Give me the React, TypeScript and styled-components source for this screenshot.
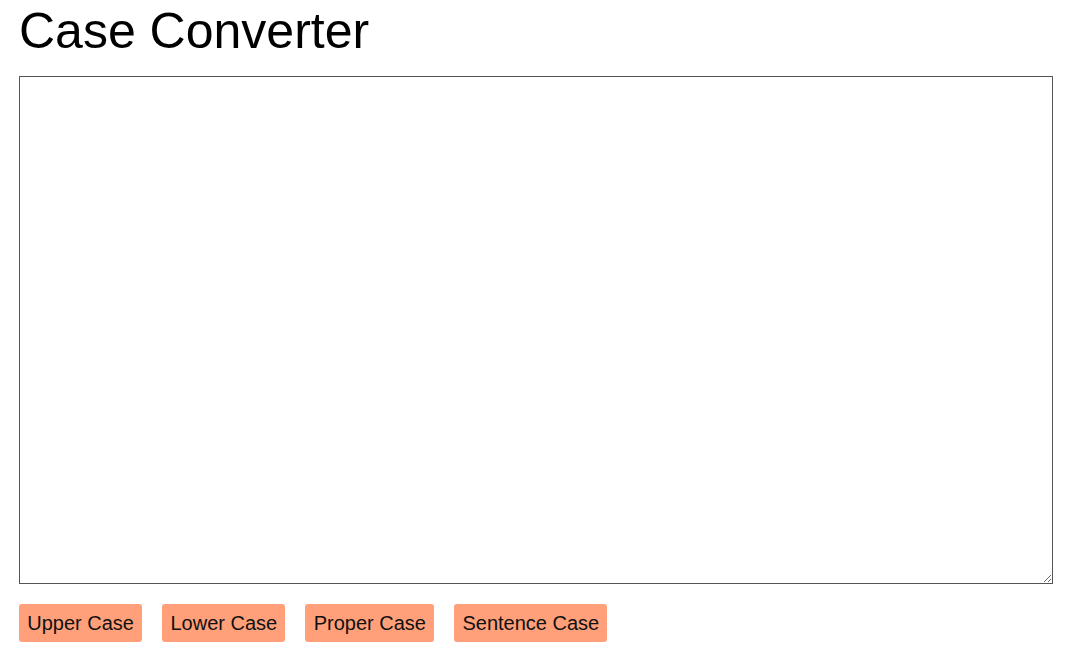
import React, { useState } from 'react';
import styled, { createGlobalStyle } from 'styled-components';

const GlobalStyle = createGlobalStyle`
  body {
    margin: 0;
    background: #ffffff;
    font-family: "Liberation Sans", Arial, sans-serif;
  }
`;

const Page = styled.div`
  padding: 3px 19px;
`;

const Title = styled.h1`
  margin: 0 0 17px;
  font-size: 50px;
  font-weight: normal;
  line-height: 56px;
  color: #000;
`;

const TextBox = styled.textarea`
  display: block;
  box-sizing: border-box;
  width: 1034px;
  height: 508px;
  margin: 0;
  padding: 4px;
  border: 1px solid #555555;
  font-family: "Liberation Sans", Arial, sans-serif;
  font-size: 16px;
  outline: none;
`;

const ButtonRow = styled.div`
  display: flex;
  gap: 20px;
  margin-top: 20px;
`;

const CaseButton = styled.button`
  box-sizing: border-box;
  height: 38px;
  padding: 0 8.25px;
  border: none;
  border-radius: 3px;
  background: #ffa07a;
  color: #111;
  font-family: "Liberation Sans", Arial, sans-serif;
  font-size: 20px;
  cursor: pointer;
`;

const toSentence = (s: string) =>
  s.toLowerCase().replace(/(^\s*\w|[.!?]\s+\w)/g, m => m.toUpperCase());

const toProper = (s: string) =>
  s.toLowerCase().replace(/\b\w/g, m => m.toUpperCase());

export default function App() {
  const [text, setText] = useState('');

  return (
    <Page>
      <GlobalStyle />
      <Title>Case Converter</Title>
      <TextBox value={text} onChange={e => setText(e.target.value)} />
      <ButtonRow>
        <CaseButton onClick={() => setText(text.toUpperCase())}>Upper Case</CaseButton>
        <CaseButton onClick={() => setText(text.toLowerCase())}>Lower Case</CaseButton>
        <CaseButton onClick={() => setText(toProper(text))}>Proper Case</CaseButton>
        <CaseButton onClick={() => setText(toSentence(text))}>Sentence Case</CaseButton>
      </ButtonRow>
    </Page>
  );
}
